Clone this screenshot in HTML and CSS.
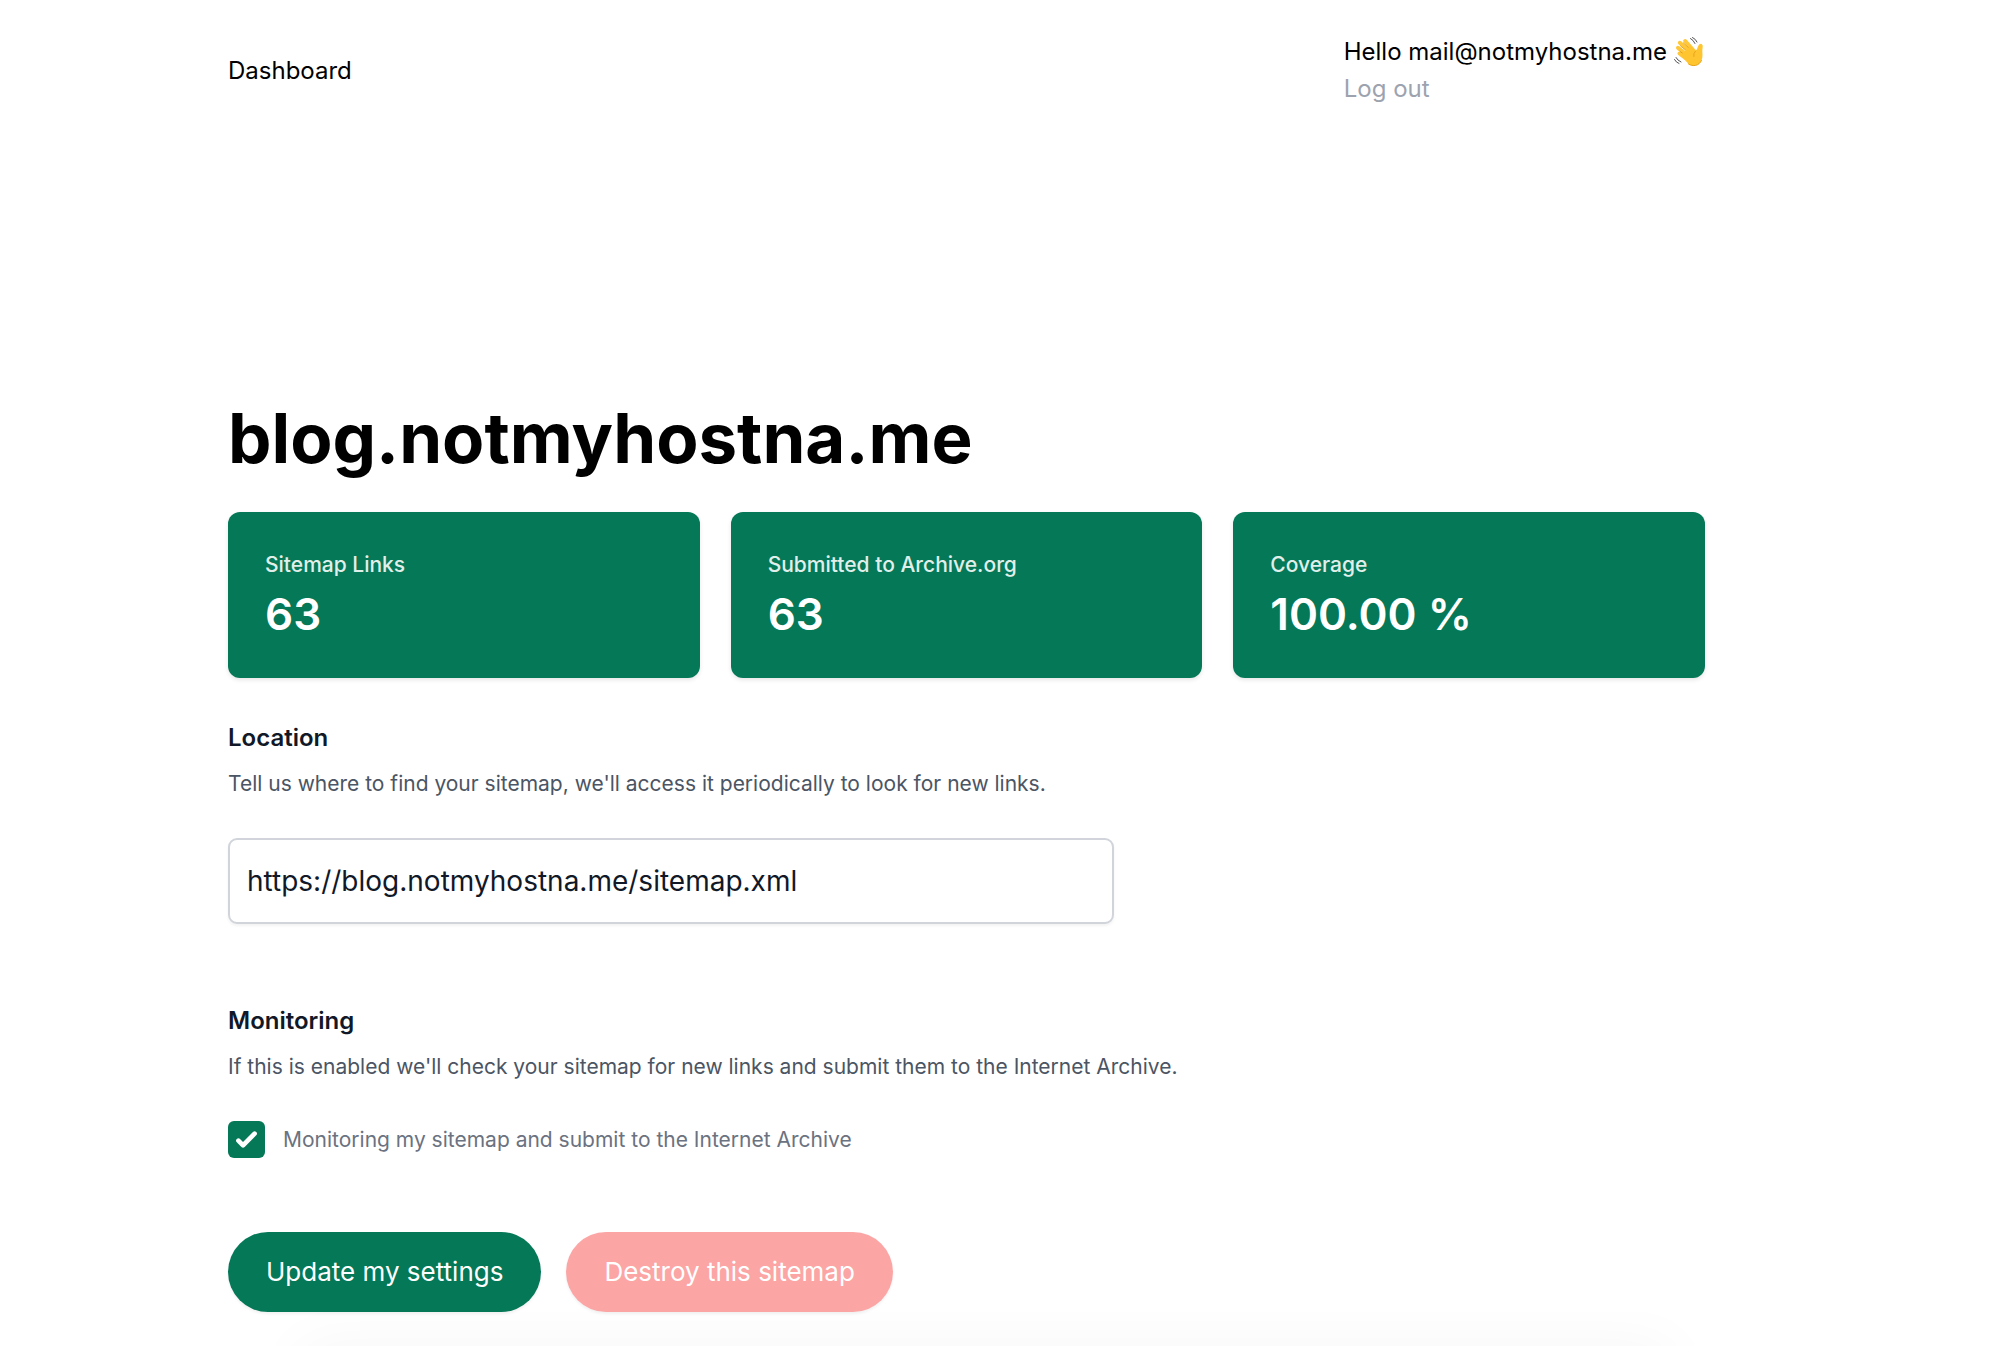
FILE: index.html
```html
<!DOCTYPE html>
<html lang="en">
<head>
<meta charset="utf-8">
<meta name="viewport" content="width=device-width, initial-scale=1">
<title>blog.notmyhostna.me</title>
<link rel="stylesheet" href="styles.css">
</head>
<body>
<div class="page">
  <header class="header">
    <nav><a class="nav-link" href="#">Dashboard</a></nav>
    <div class="account">
      <div class="greeting">
        <span>Hello mail@notmyhostna.me</span>
        <svg class="wave" viewBox="0 0 32 32" role="img" aria-label="Waving hand">
          <g fill="none" stroke-linecap="round">
            <g stroke="#ffc83a" stroke-width="4">
              <path d="M6.500 17.500 L15 24"/>
              <path d="M5 11.800 L17 21"/>
              <path d="M6.800 6.800 L19 17"/>
              <path d="M12.200 5 L21 15"/>
            </g>
            <g stroke="#dd9718" stroke-width="0.800">
              <path d="M7 15.400 L14 20.500"/>
              <path d="M7.500 9.900 L15.500 16.500"/>
              <path d="M10.400 6.800 L17.500 13.500"/>
            </g>
            <g stroke="#555" stroke-width="1">
              <path d="M17.500 2.500 Q20.500 4 22 7.500"/>
              <path d="M19.500 1.500 Q22.800 3 24 6"/>
              <path d="M3 21.500 Q4.500 24.500 8 26"/>
              <path d="M1.500 23.500 Q3 26.500 6 27.500"/>
            </g>
          </g>
          <path fill="#ffc530" d="M8 19 L17 10 L22.500 15 Q24.300 13.500 25 10.500 Q25.800 7.400 28.600 7.900 Q30.300 8.700 29.600 12 C28.700 16 30.500 20 28.500 24.500 C26 30 20 31 15.500 28 Z"/>
          <path fill="none" stroke="#e8a31d" stroke-width="1" stroke-linecap="round" d="M22.500 15 Q20 17.500 20.800 20.500 M15.500 28 C20 31 26 30 28.500 24.500"/>
        </svg>
      </div>
      <a class="logout" href="#">Log out</a>
    </div>
  </header>

  <main class="main">
    <h1 class="title">blog.notmyhostna.me</h1>

    <dl class="stats">
      <div class="stat"><dt>Sitemap Links</dt><dd>63</dd></div>
      <div class="stat"><dt>Submitted to Archive.org</dt><dd>63</dd></div>
      <div class="stat"><dt>Coverage</dt><dd>100.00 %</dd></div>
    </dl>

    <form class="settings">
      <section class="section">
        <h2><label for="location">Location</label></h2>
        <p>Tell us where to find your sitemap, we'll access it periodically to look for new links.</p>
        <input class="text-input" id="location" type="text" value="https://blog.notmyhostna.me/sitemap.xml">
      </section>

      <section class="section">
        <h2>Monitoring</h2>
        <p>If this is enabled we'll check your sitemap for new links and submit them to the Internet Archive.</p>
        <div class="check-row">
          <span class="check">
            <input id="monitoring" type="checkbox" checked>
            <svg viewBox="0 0 16 16" aria-hidden="true"><path fill="#fff" d="M12.207 4.793a1 1 0 0 1 0 1.414l-5 5a1 1 0 0 1-1.414 0l-2-2a1 1 0 0 1 1.414-1.414L6.500 9.086l4.293-4.293a1 1 0 0 1 1.414 0z"/></svg>
          </span>
          <label for="monitoring">Monitoring my sitemap and submit to the Internet Archive</label>
        </div>
      </section>

      <div class="actions">
        <button class="button button-primary" type="submit">Update my settings</button>
        <button class="button button-danger" type="button">Destroy this sitemap</button>
      </div>
    </form>
  </main>
</div>
<footer class="footer"><div class="footer-edge"></div></footer>
</body>
</html>
```
FILE: styles.css
```css
*, *::before, *::after { box-sizing: border-box; }

body {
  margin: 0;
  background: #fff;
  color: #000;
  font-family: Inter, "Liberation Sans", sans-serif;
  font-size: 24px;
  line-height: 37px;
}

h1, h2, p, dl, dd { margin: 0; }

a { color: inherit; text-decoration: none; }

.page { padding: 33px 295px 0 228px; }

.header {
  display: flex;
  justify-content: space-between;
  align-items: center;
}

.greeting {
  display: flex;
  align-items: center;
  gap: 6px;
}

.wave { width: 32px; height: 32px; }

.logout { color: #9ca3af; }

.main { padding-top: 294px; }

.title {
  font-size: 69px;
  line-height: 74px;
  font-weight: 700;
}

.stats {
  display: grid;
  grid-template-columns: repeat(3, 1fr);
  gap: 31px;
  margin-top: 37px;
}

.stat {
  padding: 37px;
  border-radius: 12px;
  background: #047857;
  color: #fff;
  box-shadow: 0 2px 4px rgba(0, 0, 0, 0.1);
}

.stat dt {
  margin-bottom: 7px;
  color: #e1efea;
  font-size: 21px;
  line-height: 31px;
  font-weight: 500;
}

.stat dd {
  font-size: 44px;
  line-height: 54px;
  font-weight: 600;
}

.section { padding-top: 41px; }

.section h2 {
  color: #111827;
  font-size: 24px;
  line-height: 37px;
  font-weight: 600;
}

.section p {
  margin-top: 12px;
  color: #4b5563;
  font-size: 21px;
  line-height: 31px;
}

.section + .section { padding-top: 78px; }

.text-input {
  display: block;
  width: 60%;
  margin-top: 39px;
  padding: 18px 17px;
  border: 2px solid #d1d5db;
  border-radius: 9px;
  background: #fff;
  box-shadow: 0 2px 3px rgba(0, 0, 0, 0.05);
  color: #111827;
  font: inherit;
  font-size: 28px;
  line-height: 46px;
}

.check-row {
  display: flex;
  align-items: center;
  gap: 18px;
  margin-top: 39px;
  color: #6b7280;
  font-size: 21px;
}

.check {
  display: grid;
  width: 37px;
  height: 37px;
}

.check input,
.check svg {
  grid-area: 1 / 1;
  width: 100%;
  height: 100%;
  margin: 0;
}

.check input {
  appearance: none;
  border-radius: 6px;
  background: #047857;
}

.check svg { pointer-events: none; z-index: 1; }

.actions {
  display: flex;
  gap: 25px;
  margin-top: 74px;
}

.button {
  padding: 18px 38px;
  border: 0;
  border-radius: 40px;
  color: #fff;
  font: inherit;
  font-size: 26px;
  line-height: 44px;
  box-shadow: 0 2px 3px rgba(0, 0, 0, 0.06);
}

.button-primary { background: #047857; }
.button-danger { background: #fca5a5; }

/* Only the soft top edge of the footer panel shows. */
.footer {
  height: 34px;
  padding: 34px 330px 0 300px;
  overflow: hidden;
}

.footer-edge {
  height: 100px;
  box-shadow: 0 0 60px rgba(0, 0, 0, 0.04);
}
```
